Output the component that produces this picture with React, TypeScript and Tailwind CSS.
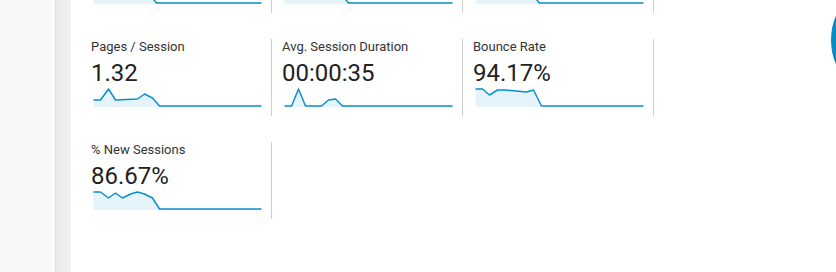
type Metric = {
  label: string;
  value: string;
  points: [number, number][];
};

const metrics: Metric[] = [
  {
    label: 'Sessions',
    value: '15',
    points: [[0, 4], [7, 4], [15, 8], [22, 6], [29, 9], [37, 5], [44, 4], [51, 8], [57, 12], [63, 20], [168, 20]],
  },
  {
    label: 'Users',
    value: '13',
    points: [[0, 5], [7, 5], [15, 9], [22, 4], [29, 9], [37, 5], [44, 4], [51, 7], [58, 12], [64, 20], [168, 20]],
  },
  {
    label: 'Pageviews',
    value: '20',
    points: [[0, 6], [7, 3], [15, 14], [22, 12], [29, 8], [37, 5], [44, 4], [51, 6], [58, 13], [64, 20], [168, 20]],
  },
  {
    label: 'Pages / Session',
    value: '1.32',
    points: [[0, 14], [7, 14], [15, 3], [22, 14], [44, 13], [51, 8], [59, 12], [66, 20], [168, 20]],
  },
  {
    label: 'Avg. Session Duration',
    value: '00:00:35',
    points: [[0, 20], [7, 20], [14, 3], [21, 20], [37, 20], [44, 14], [51, 13], [58, 20], [168, 20]],
  },
  {
    label: 'Bounce Rate',
    value: '94.17%',
    points: [[0, 3], [7, 3], [14, 9], [22, 4], [29, 4], [51, 6], [58, 4], [66, 20], [168, 20]],
  },
  {
    label: '% New Sessions',
    value: '86.67%',
    points: [[0, 3], [7, 3], [15, 9], [22, 4], [29, 9], [37, 5], [44, 3], [51, 5], [59, 9], [66, 20], [168, 20]],
  },
];

const Sparkline = ({ points }: { points: [number, number][] }) => {
  const line = points.map(([x, y]) => `${x},${y}`).join(' ');
  const area = `0,21 ${line} 168,21`;
  return (
    <svg className="ml-[2px] block" width={169} height={22} viewBox="0 0 168 22">
      <polygon points={area} fill="#e5f3fa" />
      <polyline points={line} fill="none" stroke="#0a8fcc" strokeWidth={1.5} strokeLinejoin="round" />
    </svg>
  );
};

const MetricCell = ({ metric }: { metric: Metric }) => (
  <div className="h-[77px] w-[191px] border-r border-[#cfcfcf] pl-[10px]">
    <div className="text-[13px] leading-[15px] text-[#333]">{metric.label}</div>
    <div className="mt-[6px] text-[24px] leading-[26px] text-[#222]">{metric.value}</div>
    <Sparkline points={metric.points} />
  </div>
);

export default function App() {
  return (
    <div className="flex h-[272px] w-full overflow-hidden bg-white font-['Roboto',sans-serif]">
      <div className="w-[55px] shrink-0 bg-[#f8f8f8]" />
      <div className="w-[16px] shrink-0 border-l border-[#dedede] bg-gradient-to-r from-[#e9e9e9] to-[#f1f1f1]" />
      {/* report body, scrolled so the first metric row sits above the fold */}
      <div className="relative flex-1 overflow-hidden pl-[10px]">
        <div className="-mt-[64px] grid grid-cols-[repeat(3,191px)] gap-y-[26px]">
          {metrics.map((m) => (
            <MetricCell key={m.label} metric={m} />
          ))}
        </div>
        <div className="absolute left-[760px] top-[-20px] h-[120px] w-[120px] rounded-full border-[20px] border-[#058dc7]" />
      </div>
    </div>
  );
}
